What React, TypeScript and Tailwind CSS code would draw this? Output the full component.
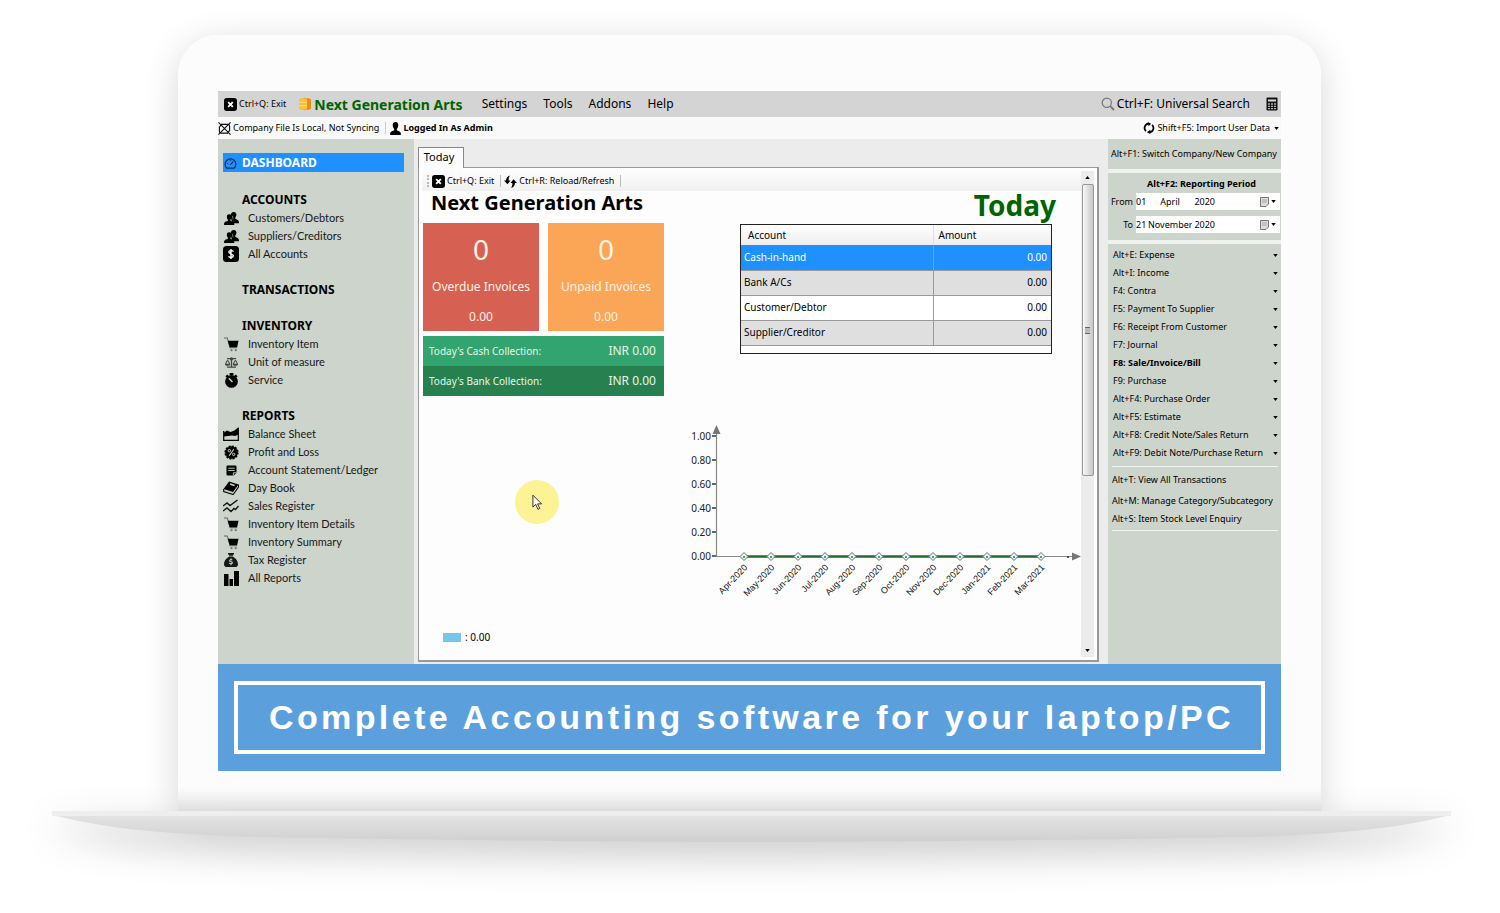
import type { ReactNode } from 'react';
import { FaBalanceScale } from 'react-icons/fa';
import { FaSackDollar } from 'react-icons/fa6';

interface NavItem {
  label: string;
  icon: ReactNode;
}

interface NavGroup {
  title: string;
  items: NavItem[];
}

function ExitIcon() {
  return (
    <svg viewBox="0 0 14 14" className="size-[13px] shrink-0">
      <rect width="14" height="14" rx="3" fill="#000" />
      <path d="M4.5 4.5l5 5M9.5 4.5l-5 5" stroke="#fff" strokeWidth="2" />
    </svg>
  );
}

function DatabaseIcon() {
  return (
    <svg viewBox="0 0 14 14" className="size-[14px] shrink-0">
      <path d="M1 2L10 1l3 1v10l-3 1-9-1z" fill="#e8910f" />
      <path d="M1 2l8-.5v11L1 12z" fill="#fbc035" />
      <path d="M1 5.300h8M1 8.700h8" stroke="#f7dc8c" strokeWidth="1" />
    </svg>
  );
}

function NoSyncIcon() {
  return (
    <svg viewBox="0 0 14 14" className="size-[13px] shrink-0" fill="none" stroke="#111" strokeWidth="1.200">
      <path d="M4 2.500h6.500a2 2 0 0 1 2 2V10M10 12H3.500a2 2 0 0 1-2-2V4.500" />
      <path d="M.5 .5l13 13M13.500 .5l-13 13" />
      <path d="M2 5l2-3M12 9.500l-2 3" />
    </svg>
  );
}

function PersonIcon() {
  return (
    <svg viewBox="0 0 12 14" className="h-[13px] w-[11px] shrink-0" fill="#000">
      <path d="M6 0c2.200 0 3.200 1.600 3 3.800-.1 1.700-.8 2.800-1.500 3.500v1.500c1 .8 4 1 4.300 3.200V14H.2v-2C.5 9.800 3.500 9.600 4.500 8.800V7.300C3.800 6.600 3.100 5.500 3 3.800 2.800 1.600 3.800 0 6 0z" />
    </svg>
  );
}

function PeopleIcon() {
  return (
    <svg viewBox="0 0 16 14" className="h-[13px] w-[15px]" fill="#000">
      <path d="M10.500 0c2 0 3 1.500 2.800 3.300-.1 1.300-.8 2.300-1.300 2.800v1.200c1 .6 3.600 1 4 3.200v1.500H9L7 5c0-3 1-5 3.500-5z" />
      <path d="M5.500 2.500C7.400 2.500 8.200 3.900 8 5.600c-.1 1.300-.7 2-1.100 2.500v1.200c.9.6 3.700.9 4.100 3V14H0v-1.700c.4-2.100 3.200-2.400 4.100-3V8.100C3.700 7.600 3.100 6.900 3 5.600 2.800 3.900 3.600 2.500 5.500 2.500z" />
      <path d="M9 4l.7 4" fill="none" stroke="#ccd4cc" strokeWidth=".6" />
    </svg>
  );
}

function CartIcon() {
  return (
    <svg viewBox="0 0 16 16" className="size-[15px]">
      <path d="M0 1h3.500l3 10.500H14" fill="none" stroke="#666" strokeWidth="1.100" />
      <path d="M4 4h11.500l-1.500 7H6z" fill="#000" />
      <circle cx="8" cy="14" r="1.200" fill="#777" />
      <circle cx="12.500" cy="14" r="1.200" fill="#777" />
    </svg>
  );
}

function SyncIcon() {
  return (
    <svg viewBox="0 0 14 14" className="size-[12px] shrink-0" fill="none" stroke="#000" strokeWidth="2">
      <path d="M3.400 10.600A5 5 0 0 1 6.500 2M10.600 3.400A5 5 0 0 1 7.500 12" />
      <path d="M5.500 0L9.500 2l-3 3zM8.500 9L4.500 12l4 2z" fill="#000" stroke="none" />
    </svg>
  );
}

function ReloadIcon() {
  return (
    <svg viewBox="0 0 14 14" className="size-[13px] shrink-0" fill="#000">
      <path d="M6.500 .5C3.500 1.500 2 4 2.200 6H0l3.700 4L7 6H5C5 4 5.200 2 6.500 .5z" />
      <path d="M7.500 14c3-1 4.500-3.500 4.300-5.500H14L10.300 4.500 7 8.500h2C9 10.500 8.800 12.500 7.500 14z" />
    </svg>
  );
}

function SearchIcon() {
  return (
    <svg viewBox="0 0 14 14" className="size-[14px] shrink-0" fill="none" stroke="#777" strokeWidth="1.200">
      <circle cx="5.800" cy="5.800" r="4.600" />
      <path d="M9.200 9.200L13 13" strokeWidth="1.800" />
    </svg>
  );
}

function CalculatorIcon() {
  return (
    <svg viewBox="0 0 12 14" className="h-[14px] w-[12px]">
      <rect x=".5" y=".5" width="11" height="13" rx="1" fill="#111" />
      <path d="M2 2.500h8v2H2z" fill="#ddd" />
      <path d="M2.200 7h7.600M2.200 9.300h7.600M2.200 11.600h7.600" stroke="#ddd" strokeWidth="1.300" strokeDasharray="1.600 1.400" />
    </svg>
  );
}

function GaugeIcon() {
  return (
    <svg viewBox="0 0 14 14" className="size-[13px]" fill="none" stroke="#0d3157" strokeWidth="1.300">
      <path d="M3 12a5.800 5.800 0 1 1 8 0z" />
      <path d="M6.500 8.500L10 5M3 7h1M7 3v1" />
    </svg>
  );
}

function DollarBoxIcon() {
  return (
    <svg viewBox="0 0 16 16" className="size-[16px]">
      <rect width="16" height="16" rx="3.500" fill="#000" />
      <path d="M10.500 5.500C10 4.500 6 4 5.800 6c0 2 4.600 1.600 4.500 3.900-.2 2-4 1.800-4.800.4M8 3v10" stroke="#fff" strokeWidth="1.400" fill="none" />
    </svg>
  );
}

function StopwatchIcon() {
  return (
    <svg viewBox="0 0 16 16" className="size-[15px]">
      <circle cx="8" cy="9" r="6.800" fill="#000" />
      <path d="M6 0h4v2H6zM12.500 1.500l2 2-1.500 1.500-2-2zM3.500 1.500l-2 2L3 5l2-2z" fill="#000" />
      <path d="M5.200 5.500L9 9.500" stroke="#ccd4cc" strokeWidth="1.600" />
    </svg>
  );
}

function AreaChartIcon() {
  return (
    <svg viewBox="0 0 16 14" className="h-[14px] w-[16px]">
      <path d="M.7 4v9.300h14.600V1" fill="none" stroke="#000" strokeWidth="1.200" />
      <path d="M1 9.500V5.500l3-2 3.500 1.500 4-1.500L15.500 0v7.500L12 9 9 8.500 5 9z" fill="#000" />
    </svg>
  );
}

function PercentIcon() {
  return (
    <svg viewBox="0 0 16 16" className="size-[15px]">
      <circle cx="8" cy="8" r="6.600" fill="#000" stroke="#000" strokeWidth="2" strokeDasharray="2.200 1.200" />
      <circle cx="5.700" cy="6" r="1.300" fill="none" stroke="#ccd4cc" />
      <circle cx="10.300" cy="10" r="1.300" fill="none" stroke="#ccd4cc" />
      <path d="M10.500 4.500l-5 7" stroke="#ccd4cc" strokeWidth="1.200" />
    </svg>
  );
}

function NoteIcon() {
  return (
    <svg viewBox="0 0 12 12" className="size-[11px]">
      <path d="M2 .5h8A1.500 1.500 0 0 1 11.500 2v6.500L8.500 11.500H2A1.500 1.500 0 0 1 .5 10V2A1.500 1.500 0 0 1 2 .5z" fill="#000" />
      <path d="M2.500 3.500h7M2.500 6h7" stroke="#ccd4cc" />
      <path d="M8 11.500V8.500h3.500" fill="none" stroke="#ccd4cc" />
    </svg>
  );
}

function BookIcon() {
  return (
    <svg viewBox="0 0 16 14" className="h-[14px] w-[16px]">
      <path d="M6 .5l9.500 3L10 11 .5 8z" fill="#000" />
      <path d="M.7 8v2.500l9.500 3 5.300-7.500V3.500" fill="none" stroke="#000" strokeWidth="1.100" />
      <path d="M7 3l4.500 1.500" stroke="#ccd4cc" strokeWidth="1.500" />
    </svg>
  );
}

function TrendIcon() {
  return (
    <svg viewBox="0 0 16 14" className="h-[14px] w-[16px]" fill="none" stroke="#111" strokeWidth="1.400">
      <path d="M0 7l4-3 3 2.500L14.500 1M0 12l4-3 4 3.500 3-3 1.500 1L15.500 7" />
    </svg>
  );
}

function BarsIcon() {
  return (
    <svg viewBox="0 0 15 15" className="size-[15px]" fill="#000">
      <path d="M0 3h4.500v12H0zM5.500 8H9v7H5.500zM10 0h5v15h-5z" />
    </svg>
  );
}

const groups: NavGroup[] = [
  {
    title: 'ACCOUNTS',
    items: [
      { label: 'Customers/Debtors', icon: <PeopleIcon /> },
      { label: 'Suppliers/Creditors', icon: <PeopleIcon /> },
      { label: 'All Accounts', icon: <DollarBoxIcon /> },
    ],
  },
  { title: 'TRANSACTIONS', items: [] },
  {
    title: 'INVENTORY',
    items: [
      { label: 'Inventory Item', icon: <CartIcon /> },
      { label: 'Unit of measure', icon: <FaBalanceScale className="size-[13px] text-[#444]" /> },
      { label: 'Service', icon: <StopwatchIcon /> },
    ],
  },
  {
    title: 'REPORTS',
    items: [
      { label: 'Balance Sheet', icon: <AreaChartIcon /> },
      { label: 'Profit and Loss', icon: <PercentIcon /> },
      { label: 'Account Statement/Ledger', icon: <NoteIcon /> },
      { label: 'Day Book', icon: <BookIcon /> },
      { label: 'Sales Register', icon: <TrendIcon /> },
      { label: 'Inventory Item Details', icon: <CartIcon /> },
      { label: 'Inventory Summary', icon: <CartIcon /> },
      { label: 'Tax Register', icon: <FaSackDollar className="size-[14px]" /> },
      { label: 'All Reports', icon: <BarsIcon /> },
    ],
  },
];

const vouchers = [
  'Alt+E: Expense',
  'Alt+I: Income',
  'F4: Contra',
  'F5: Payment To Supplier',
  'F6: Receipt From Customer',
  'F7: Journal',
  'F8: Sale/Invoice/Bill',
  'F9: Purchase',
  'Alt+F4: Purchase Order',
  'Alt+F5: Estimate',
  'Alt+F8: Credit Note/Sales Return',
  'Alt+F9: Debit Note/Purchase Return',
];

const balances = [
  { account: 'Cash-in-hand', amount: '0.00', row: 'bg-[#1e90ff] text-white' },
  { account: 'Bank A/Cs', amount: '0.00', row: 'bg-[#dfdfdf]' },
  { account: 'Customer/Debtor', amount: '0.00', row: 'bg-white' },
  { account: 'Supplier/Creditor', amount: '0.00', row: 'bg-[#dfdfdf]' },
];

const months = [
  'Apr-2020', 'May-2020', 'Jun-2020', 'Jul-2020', 'Aug-2020', 'Sep-2020',
  'Oct-2020', 'Nov-2020', 'Dec-2020', 'Jan-2021', 'Feb-2021', 'Mar-2021',
];

const ticks = ['1.00', '0.80', '0.60', '0.40', '0.20', '0.00'];

function Caret() {
  return (
    <svg viewBox="0 0 6 4" className="h-[3px] w-[5px] shrink-0" fill="#000">
      <path d="M0 0h6L3 4z" />
    </svg>
  );
}

function MenuBar() {
  return (
    <header>
      <div className="flex h-[26px] items-center bg-[#d4d4d4] pr-[3px] pl-[6px]">
        <button className="flex items-center gap-[2px] text-[9px]">
          <ExitIcon />
          Ctrl+Q: Exit
        </button>
        <div className="ml-3 flex items-center gap-[2px]">
          <DatabaseIcon />
          <h1 className="text-[14px] font-bold text-[#006400]">Next Generation Arts</h1>
        </div>
        <nav className="ml-[19px] flex gap-4 text-[12px]">
          <a href="#settings">Settings</a>
          <a href="#tools">Tools</a>
          <a href="#addons">Addons</a>
          <a href="#help">Help</a>
        </nav>
        <button className="ml-auto flex items-center gap-[2px] text-[12px]">
          <SearchIcon />
          Ctrl+F: Universal Search
        </button>
        <button className="ml-4" aria-label="Calculator">
          <CalculatorIcon />
        </button>
      </div>
      <div className="flex h-[22px] items-center bg-[#f8f9f8] text-[9px]">
        <NoSyncIcon />
        <span className="ml-[2px]">Company File Is Local, Not Syncing</span>
        <span className="ml-[6px] h-3 w-px bg-[#ccc]" />
        <span className="ml-1">
          <PersonIcon />
        </span>
        <span className="ml-[2px] font-bold">Logged In As Admin</span>
        <button className="ml-auto flex items-center gap-[2px] pr-[2px]">
          <SyncIcon />
          Shift+F5: Import User Data
          <span className="ml-[2px]">
            <Caret />
          </span>
        </button>
      </div>
    </header>
  );
}

function Sidebar() {
  return (
    <nav className="w-[196px] shrink-0 bg-[#ccd4cc] pt-[14px] pl-[5px] text-[11px] leading-[18px]">
      <a href="#dashboard" className="mr-[10px] mb-[19px] flex h-[19px] items-center bg-[#1e90ff] pt-px pl-[1px] text-[12px] font-bold text-white">
        <span className="w-[18px]">
          <GaugeIcon />
        </span>
        DASHBOARD
      </a>
      {groups.map((group) => (
        <section key={group.title} className="mb-[18px]">
          <h2 className="h-[18px] pl-[19px] text-[12px] font-bold">{group.title}</h2>
          {group.items.map((item) => (
            <a key={item.label} href="#report" className="flex h-[18px] items-center font-['Lato',sans-serif] text-[#181818]">
              <span className="mr-[9px] flex w-[16px] justify-center">{item.icon}</span>
              {item.label}
            </a>
          ))}
        </section>
      ))}
    </nav>
  );
}

function InvoiceCard({ title, tone }: { title: string; tone: string }) {
  return (
    <div className={`flex h-[108px] w-[116px] flex-col items-center text-[#fff3e4] ${tone}`}>
      <div className="mt-[8px] text-[28px] leading-[36px]">0</div>
      <div className="mt-[10px] text-[12px] leading-[20px]">{title}</div>
      <div className="mt-[10px] text-[12px] leading-[20px]">0.00</div>
    </div>
  );
}

function Collection({ label, tone }: { label: string; tone: string }) {
  return (
    <div className={`flex h-[30px] items-center justify-between pr-2 pl-[6px] text-[#e6f7ea] ${tone}`}>
      <span className="text-[10px]">{label}</span>
      <span className="text-[12px]">INR 0.00</span>
    </div>
  );
}

function TrendChart() {
  return (
    <svg viewBox="-7 0 398 180" className="h-[180px] w-[398px]" role="img" aria-label="Monthly trend">
      {ticks.map((tick, i) => (
        <g key={tick}>
          <text x="21" y={15 + i * 24} textAnchor="end" fontSize="10" fill="#222">{tick}</text>
          <path d={`M22 ${11 + i * 24}h5`} stroke="#333" strokeWidth="1.500" />
        </g>
      ))}
      <path d="M26.500 8v123.500H384" fill="none" stroke="#888" strokeWidth="1.200" />
      <path d="M22.500 9l4-9 4 9zM382 127.500l9 4-9 4z" fill="#777" />
      <path d="M54 131.500H351" stroke="#226b2c" strokeWidth="2.500" />
      <circle cx="378" cy="132" r="1" fill="#222" />
      {months.map((month, i) => {
        const x = 54 + i * 27;
        return (
          <g key={month}>
            <path d={`M${x - 4} 131.500l4-4 4 4-4 4z`} fill="#e9f5ef" stroke="#567a68" />
            <circle cx={x} cy="132" r="1" fill="#466" />
            <text
              transform={`translate(${x + 4} 143) rotate(-46)`}
              textAnchor="end"
              fontSize="9"
              className="font-['Liberation_Sans',sans-serif]"
              fill="#111"
            >
              {month}
            </text>
          </g>
        );
      })}
    </svg>
  );
}

function ScrollBar() {
  return (
    <div className="flex w-[13px] shrink-0 flex-col items-center bg-[#ececec] pt-[5px] pb-[5px]">
      <svg viewBox="0 0 6 4" className="h-[3px] w-[5px]">
        <path d="M0 4h6L3 0z" />
      </svg>
      <div className="mt-[5px] flex h-[292px] w-[12px] items-center justify-center rounded-[2px] border border-[#999] bg-linear-to-r from-[#f8f8f8] to-[#c4c6c8]">
        <span className="h-[7px] w-[5px] border-y border-[#666] bg-[#bbb]" />
      </div>
      <span className="mt-auto">
        <Caret />
      </span>
    </div>
  );
}

function TodayPanel() {
  return (
    <main className="flex min-w-0 flex-1 flex-col border-x-4 border-[#ececec] bg-[#ececec] pt-[8px] pr-[5px] pb-[2px]">
      <div className="flex" role="tablist">
        <button role="tab" aria-selected="true" className="relative z-10 -mb-px h-[21px] w-[46px] border border-b-0 border-[#888] bg-[#fdfdfd] pr-1 pb-[2px] text-[11px]">
          Today
        </button>
      </div>
      <div className="relative flex flex-1 border border-r-2 border-b-2 border-[#999] bg-[#fdfdfd] p-[3px]">
        <div className="flex min-w-0 flex-1 flex-col">
          <div className="flex h-5 items-center bg-linear-to-b from-[#fdfdfd] to-[#f0f0f0] pl-[5px] text-[9px]">
            <span className="mr-[3px] h-3 border-l-2 border-dotted border-[#bbb]" />
            <button className="flex items-center gap-[2px]">
              <ExitIcon />
              Ctrl+Q: Exit
            </button>
            <span className="mr-[3px] ml-[6px] h-3 w-px bg-[#bbb]" />
            <button className="flex items-center gap-[2px]">
              <ReloadIcon />
              Ctrl+R: Reload/Refresh
            </button>
            <span className="ml-[6px] h-3 w-px bg-[#bbb]" />
          </div>
          <div className="flex flex-1 justify-between pl-[1px]">
            <div className="flex w-[241px] flex-col">
              <h2 className="h-[32px] pl-2 text-[20px] leading-[24px] font-bold whitespace-nowrap">Next Generation Arts</h2>
              <div className="mb-[5px] flex justify-between">
                <InvoiceCard title="Overdue Invoices" tone="bg-[#d66152]" />
                <InvoiceCard title="Unpaid Invoices" tone="bg-[#fba557]" />
              </div>
              <Collection label="Today's Cash Collection:" tone="bg-[#32a46f]" />
              <Collection label="Today's Bank Collection:" tone="bg-[#26804f]" />
              <div className="mt-auto mb-3 flex items-center gap-1 pl-5 text-[10px]">
                <span className="h-[9px] w-[18px] bg-[#76c5ea]" />
                : 0.00
              </div>
            </div>
            <div className="flex w-[398px] flex-col">
              <h2 className="mr-[25px] h-[33px] text-right text-[28px] leading-[28px] font-bold text-[#006400]">Today</h2>
              <div className="mr-[29px] h-[130px] w-[312px] self-end border border-[#222] bg-white">
                <table className="w-full border-collapse text-[10px]">
                  <thead>
                    <tr className="h-[20px] bg-linear-to-b from-white to-[#eee] text-left">
                      <th className="w-[192px] pl-[7px] font-normal">Account</th>
                      <th className="border-l border-[#ddd] pl-[5px] font-normal">Amount</th>
                    </tr>
                  </thead>
                  <tbody>
                    {balances.map((b) => (
                      <tr key={b.account} className={`h-[25px] border-b border-[#999] ${b.row}`}>
                        <td className="pl-[3px]">{b.account}</td>
                        <td className="border-l border-[#999] pr-1 text-right">{b.amount}</td>
                      </tr>
                    ))}
                  </tbody>
                </table>
              </div>
              <div className="mt-[71px]">
                <TrendChart />
              </div>
            </div>
          </div>
        </div>
        <ScrollBar />
        {/* click highlight with the pointer on top */}
        <div className="absolute top-[312px] left-[96px] flex size-[44px] items-center justify-center rounded-full bg-[#fbf394]">
          <svg viewBox="0 0 12 18" className="h-[17px] w-[11px]">
            <path d="M1 1v13l3-3 2.500 5.500 2-1L6 10.500h4.500z" fill="#fff" stroke="#222" />
          </svg>
        </div>
      </div>
    </main>
  );
}

function DateRow({ label, day, month, year }: { label: string; day: string; month: string; year: string }) {
  return (
    <div role="group" aria-label={label} className="flex h-[17px] items-center">
      <span className="w-[28px] pr-[3px] text-right">{label}</span>
      <div className="flex h-full flex-1 items-center bg-white">
        <input aria-label={`${label} day`} defaultValue={day} className="w-[12px]" />
        <input aria-label={`${label} month`} defaultValue={month} className="w-[44px] text-center" />
        <input aria-label={`${label} year`} defaultValue={year} className="w-[23px] text-right" />
        <button aria-label={`Pick ${label} date`} className="ml-auto flex items-center gap-[2px] pr-1">
          <svg viewBox="0 0 9 10" className="h-[10px] w-[9px]">
            <path d="M.5 .5h8v6.500L6 9.500H.5z" fill="#dcdcdc" stroke="#777" />
            <path d="M2 3h5M2 5h5" stroke="#aaa" />
          </svg>
          <Caret />
        </button>
      </div>
    </div>
  );
}

function ActionPanel() {
  return (
    <aside className="flex w-[173px] shrink-0 flex-col gap-1 bg-[#f0f2f0] text-[9px] whitespace-nowrap">
      <button className="h-[30px] bg-[#ccd4cc] pl-[3px] text-left">Alt+F1: Switch Company/New Company</button>
      <div className="bg-[#ccd4cc] pt-[3px] pb-[7px]">
        <h3 className="h-[17px] pl-[14px] text-center leading-[16px] font-bold">Alt+F2: Reporting Period</h3>
        <div className="flex flex-col gap-[6px] pr-[1px]">
          <DateRow label="From" day="01" month="April" year="2020" />
          <DateRow label="To" day="21" month="November" year="2020" />
        </div>
      </div>
      <div className="flex-1 bg-[#ccd4cc] pt-[2px] pr-[3px] pl-[4px]">
        {vouchers.map((v) => (
          <button key={v} className={`flex h-[18px] w-full items-center justify-between pl-[1px] ${v.startsWith('F8') ? 'font-bold' : ''}`}>
            {v}
            <Caret />
          </button>
        ))}
        <div className="mt-1 border-y border-[#f2f4f2] pt-[4px] pb-[2px]">
          <button className="mb-[3px] block h-[18px]">Alt+T: View All Transactions</button>
          <button className="block h-[18px]">Alt+M: Manage Category/Subcategory</button>
          <button className="block h-[18px]">Alt+S: Item Stock Level Enquiry</button>
        </div>
      </div>
    </aside>
  );
}

function LaptopBase() {
  return (
    <svg
      viewBox="0 0 1400 32"
      preserveAspectRatio="none"
      className="relative block h-[32px] w-full drop-shadow-[0_14px_18px_rgba(0,0,0,0.22)]"
      aria-hidden="true"
    >
      <defs>
        <linearGradient id="base" x1="0" y1="0" x2="0" y2="1">
          <stop offset="0" stopColor="#e6e6e6" />
          <stop offset="1" stopColor="#d0d0d0" />
        </linearGradient>
      </defs>
      <path d="M0 0H1400V4C1350 16 1310 22 1200 26C1050 29 800 31 700 31C600 31 350 29 200 26C90 22 50 16 0 4Z" fill="url(#base)" />
      <path d="M0 0H1400V5H0z" fill="#eeeeee" />
    </svg>
  );
}

export default function App() {
  return (
    <div className="min-h-screen overflow-hidden bg-white pt-[35px] pr-[49px] pb-[70px] pl-[52px] font-['Noto_Sans',sans-serif] text-black">
      <div className="mr-[130px] ml-[126px] rounded-t-[40px] bg-linear-to-b from-[#fcfcfd] from-97% to-[#e9e9e9] px-[40px] pt-[56px] pb-[40px] shadow-[0_8px_36px_rgba(0,0,0,0.16)]">
        <div className="flex flex-col">
          <MenuBar />
          <div className="flex min-h-[525px]">
            <Sidebar />
            <TodayPanel />
            <ActionPanel />
          </div>
          <div className="bg-[#5ba0dd] px-4 py-[17px]">
            <p className="flex h-[73px] items-center justify-center border-4 border-white pl-1 font-['Liberation_Sans',sans-serif] text-[34px] font-bold tracking-widest whitespace-nowrap text-white">
              Complete Accounting software for your laptop/PC
            </p>
          </div>
        </div>
      </div>
      <LaptopBase />
    </div>
  );
}
